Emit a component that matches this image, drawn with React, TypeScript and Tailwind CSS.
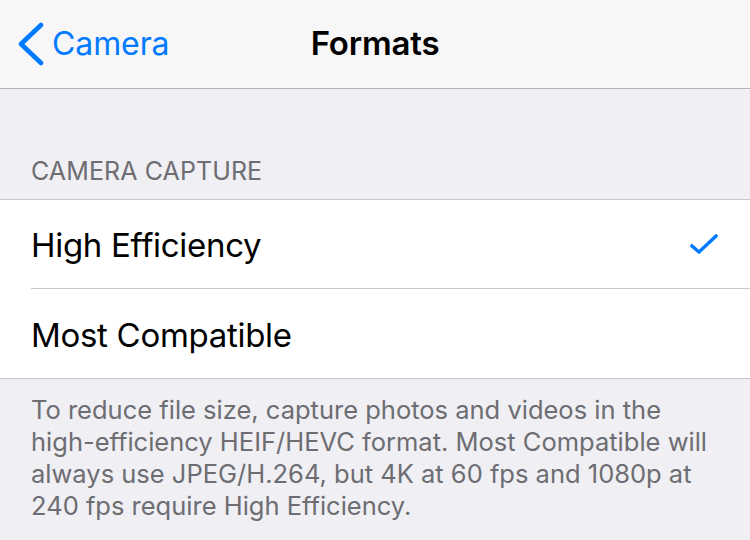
import React from "react";

const font = { fontFamily: "Inter, 'Liberation Sans', sans-serif" };

function Row({ label, checked, last }: { label: string; checked?: boolean; last?: boolean }) {
  return (
    <div className="pl-[31px] bg-white">
      <div
        className={`h-[89px] flex items-center justify-between pr-[32px] pt-[4px] ${
          last ? "" : "border-b border-[#c8c7cc]"
        }`}
      >
        <span className="text-[33px] text-black tracking-[-0.3px]">{label}</span>
        {checked && (
          <svg width="28" height="20" viewBox="0 0 28 20" fill="none" className="-mt-[4px]">
            <path
              d="M2 12 L9 18 L26 2"
              stroke="#007aff"
              strokeWidth="3.4"
              strokeLinecap="square"
              strokeLinejoin="miter"
            />
          </svg>
        )}
      </div>
    </div>
  );
}

export default function App() {
  return (
    <div className="w-[750px] h-[540px] overflow-hidden bg-[#efeff4]" style={font}>
      {/* nav bar */}
      <div className="h-[89px] bg-[#f7f7f7] border-b border-[#b2b2b2] flex items-center relative">
        <div className="flex items-center pl-[17px] text-[#007aff]">
          <svg width="28" height="44" viewBox="0 0 28 44" fill="none">
            <path
              d="M24 3 L4 22 L24 41"
              stroke="#007aff"
              strokeWidth="4.6"
              strokeLinecap="round"
              strokeLinejoin="round"
            />
          </svg>
          <span className="text-[32px] ml-[7px] tracking-[-0.1px]">Camera</span>
        </div>
        <div className="absolute left-0 right-0 text-center text-[33px] font-semibold text-black pointer-events-none tracking-[-0.2px]">
          Formats
        </div>
      </div>

      {/* section header */}
      <div className="h-[110px] flex items-end pl-[31px] pb-[9px]">
        <span className="text-[25px] text-[#6d6d72] tracking-[0.1px]">CAMERA CAPTURE</span>
      </div>

      <div className="border-t border-b border-[#c8c7cc]">
        <Row label="High Efficiency" checked />
        <Row label="Most Compatible" last />
      </div>

      {/* footer */}
      <div className="pl-[31px] pr-[20px] pt-[15px] text-[25.5px] leading-[32px] text-[#6d6d72]">
        <div>To reduce file size, capture photos and videos in the</div>
        <div>high-efficiency HEIF/HEVC format. Most Compatible will</div>
        <div>always use JPEG/H.264, but 4K at 60 fps and 1080p at</div>
        <div>240 fps require High Efficiency.</div>
      </div>
    </div>
  );
}
